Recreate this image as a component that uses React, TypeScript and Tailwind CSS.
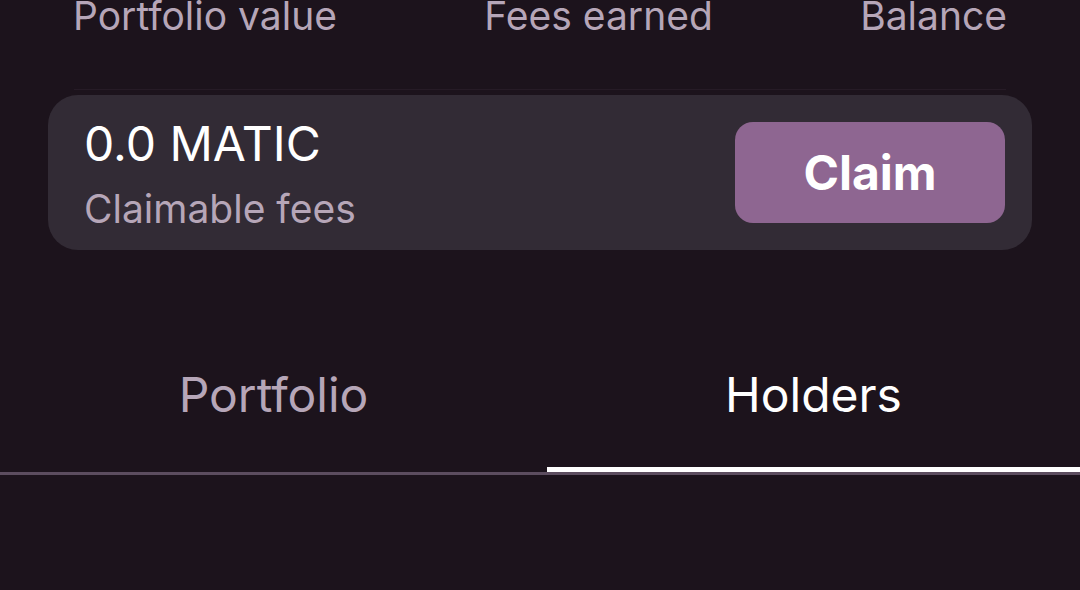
export default function App() {
  return (
    <div
      className="w-[1080px] h-[590px] overflow-hidden bg-[#1c131c] flex flex-col"
      style={{ fontFamily: 'Inter, "Noto Sans", sans-serif' }}
    >
      {/* Stat labels */}
      <div className="-mt-[4px] flex justify-between px-[73px] text-[39px] leading-none text-[#b6a6b8]">
        <span>Portfolio value</span>
        <span>Fees earned</span>
        <span>Balance</span>
      </div>
      <div className="mt-[54px] mx-[74px] h-px bg-[#261b26]" />

      {/* Claimable fees card */}
      <div className="mt-[5px] mx-[48px] h-[155px] rounded-[30px] bg-[#322b35] flex items-center justify-between pl-[36px] pr-[27px]">
        <div className="flex flex-col pt-[2px]">
          <span className="text-[48px] leading-none text-white">0.0 MATIC</span>
          <span className="mt-[21px] text-[39px] leading-none text-[#b6a6b8]">Claimable fees</span>
        </div>
        <button className="w-[270px] h-[101px] rounded-[18px] bg-[#8e6691] text-white text-[48px] font-bold leading-none">
          Claim
        </button>
      </div>

      {/* Tabs */}
      <div className="mt-[121px] grid grid-cols-2 border-b-[3px] border-[#5c4d5f]">
        <div className="flex flex-col items-center">
          <span className="ml-[7px] text-[48px] leading-none text-[#b6a6b8]">Portfolio</span>
          <div className="mt-[48px] h-[5px] self-stretch" />
        </div>
        <div className="flex flex-col items-center">
          <span className="ml-[7px] text-[48px] leading-none text-white">Holders</span>
          <div className="mt-[48px] ml-[7px] h-[5px] self-stretch bg-white" />
        </div>
      </div>
    </div>
  );
}
